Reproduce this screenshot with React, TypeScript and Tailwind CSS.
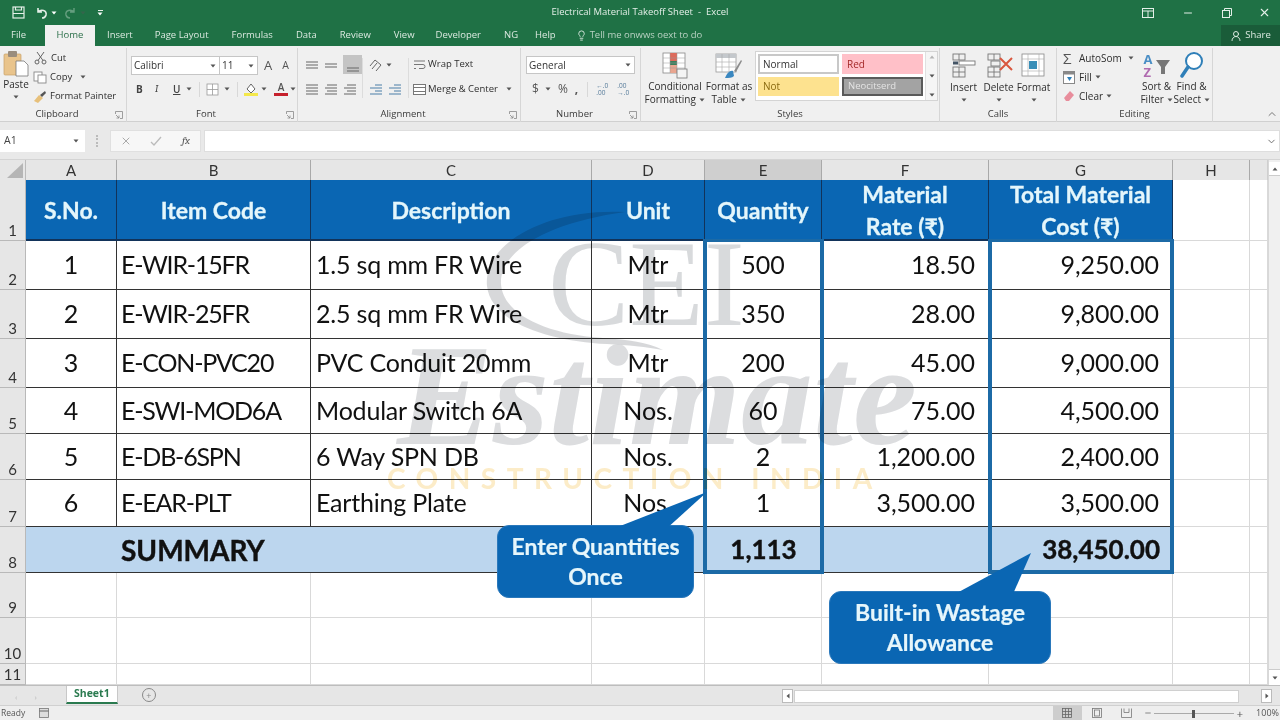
import type { ReactNode } from 'react'
import { ChevronDown, ChevronUp, Lightbulb, Minus, UserRound, X } from 'lucide-react'

const TABS = [
  { label: 'Insert', cls: 'ml-[12px]' },
  { label: 'Page Layout', cls: 'ml-[22px]' },
  { label: 'Formulas', cls: 'ml-[23px]' },
  { label: 'Data', cls: 'ml-[23px]' },
  { label: 'Review', cls: 'ml-[23px]' },
  { label: 'View', cls: 'ml-[23px]' },
  { label: 'Developer', cls: 'ml-[21px]' },
  { label: 'NG', cls: 'ml-[23px]' },
  { label: 'Help', cls: 'ml-[17px]' },
]

const COLS = ['A', 'B', 'C', 'D', 'E', 'F', 'G', 'H']
const ROW_HEIGHTS = [61, 49, 49, 49, 46, 46, 47, 46, 45, 46, 21]

const ROWS = [
  ['1', 'E-WIR-15FR', '1.5 sq mm FR Wire', 'Mtr', '500', '18.50', '9,250.00'],
  ['2', 'E-WIR-25FR', '2.5 sq mm FR Wire', 'Mtr', '350', '28.00', '9,800.00'],
  ['3', 'E-CON-PVC20', 'PVC Conduit 20mm', 'Mtr', '200', '45.00', '9,000.00'],
  ['4', 'E-SWI-MOD6A', 'Modular Switch 6A', 'Nos.', '60', '75.00', '4,500.00'],
  ['5', 'E-DB-6SPN', '6 Way SPN DB', 'Nos.', '2', '1,200.00', '2,400.00'],
  ['6', 'E-EAR-PLT', 'Earthing Plate', 'Nos.', '1', '3,500.00', '3,500.00'],
]

const HEADERS = ['S.No.', 'Item Code', 'Description', 'Unit', 'Quantity', 'Material\nRate (₹)', 'Total Material\nCost (₹)']
const ALIGN = [
  'justify-center',
  'justify-start pl-[4px] tracking-[-1.2px]',
  'justify-start pl-[5px] tracking-[-0.2px]',
  'justify-center',
  'justify-center',
  'justify-end pr-[13px]',
  'justify-end pr-[13px]',
]

const Caret = ({ className = '' }: { className?: string }) => (
  <svg width="6" height="4" viewBox="0 0 6 4" className={`shrink-0 ${className}`}>
    <path d="M0.5 0.5h5L3 3.5z" fill="#555" />
  </svg>
)

function Lines({ rows, color = '#666' }: { rows: [number, number][]; color?: string }) {
  return (
    <svg width="14" height="12" viewBox="0 0 14 12">
      {rows.map(([x, y], i) => (
        <path key={i} d={`M${x} ${y}H${14 - (i % 2 ? x : 1)}`} stroke={color} strokeWidth="1" />
      ))}
    </svg>
  )
}

function Group({ label, width, launcher, children }: { label: string; width: string; launcher?: boolean; children: ReactNode }) {
  return (
    <div className={`${width} h-[74px] mt-[2px] shrink-0 flex flex-col border-r border-[#d6d6d6]`}>
      <div className="flex-1 flex min-h-0">{children}</div>
      <div className={`relative h-[16px] flex items-center justify-center text-[9.5px] text-[#3a3a3a] ${launcher ? 'pr-[12px]' : ''}`}>
        {label}
        {launcher && (
          <svg width="8" height="8" viewBox="0 0 8 8" className="absolute right-[3px] top-[5px]">
            <path d="M0.5 3V0.5H7.5V7.5H5M1 4l3 3M4 4.5V7H1.5" stroke="#888" fill="none" strokeWidth="0.8" />
          </svg>
        )}
      </div>
    </div>
  )
}

function BigButton({ label, icon, width, caret }: { label: ReactNode; icon: ReactNode; width: string; caret?: boolean }) {
  return (
    <div className={`${width} shrink-0 flex flex-col items-center text-[10px] leading-[13px] text-[#2e2e2e]`}>
      <div className="h-[29px] mb-[1px] flex items-end justify-center">{icon}</div>
      <div className="text-center whitespace-nowrap">{label}</div>
      {caret && <Caret className="mt-[4px]" />}
    </div>
  )
}

const PasteIcon = () => (
  <svg width="26" height="27" viewBox="0 0 26 27">
    <rect x="1" y="4" width="17" height="21" rx="1" fill="#e9c48c" stroke="#c9a269" strokeWidth="0.7" />
    <rect x="5" y="1" width="9" height="6" rx="1" fill="#9a8d7d" />
    <path d="M13 11h8l4 4v11H13z" fill="#fff" stroke="#777" strokeWidth="0.8" />
  </svg>
)

const CfIcon = () => (
  <svg width="26" height="27" viewBox="0 0 26 27">
    <rect x="1" y="1" width="22" height="20" fill="#fff" stroke="#888" strokeWidth="0.8" />
    <rect x="8" y="1" width="7" height="8" fill="#dd6b5c" />
    <rect x="8" y="9" width="7" height="4" fill="#3c7e5c" />
    <rect x="8" y="13" width="7" height="8" fill="#e9a58f" />
    <path d="M1 6h22M1 11h22M1 16h22M8 1v20M15 1v20" stroke="#999" strokeWidth="0.5" />
    <rect x="15" y="17" width="10" height="9" fill="#f4f4f4" stroke="#777" strokeWidth="0.8" />
  </svg>
)

const TableIcon = () => (
  <svg width="28" height="27" viewBox="0 0 28 27">
    <rect x="1" y="2" width="20" height="18" fill="#fff" stroke="#9a9a9a" strokeWidth="0.8" />
    <rect x="1" y="2" width="20" height="4" fill="#c4c8cc" />
    <path d="M1 10h20M1 15h20M7 2v18M14 2v18" stroke="#aaa" strokeWidth="0.6" />
    <path d="M10 26c2-5 5-8 8-7l1 5c-2 2-5 2-9 2z" fill="#3a87c0" />
    <path d="M19 19l7-11 1 1-6 11z" fill="#8c8c8c" />
  </svg>
)

const CellsIcon = ({ variant }: { variant: 'insert' | 'delete' | 'format' }) => (
  <svg width="28" height="28" viewBox="0 0 28 28">
    {variant === 'format' ? (
      <g>
        <rect x="2" y="2" width="22" height="22" fill="#fff" stroke="#888" strokeWidth="0.8" />
        <path d="M2 7h22M8 2v22M19 2v22M2 19h22" stroke="#aaa" strokeWidth="0.6" />
        <rect x="9" y="9" width="8" height="8" fill="#3a8fb8" />
      </g>
    ) : (
      <g fill="none" stroke="#777" strokeWidth="0.9">
        <rect x="3" y="2" width="12" height="6" />
        <path d="M9 2v6" />
        <rect x="3" y="15" width="12" height="10" />
        <path d="M9 15v10M3 20h12" />
        {variant === 'insert' ? (
          <g>
            <rect x="9" y="9" width="16" height="4" fill="#fff" />
            <path d="M3 11h5" stroke="#456" strokeWidth="3" />
          </g>
        ) : (
          <g>
            <rect x="6" y="9" width="9" height="5" />
            <path d="M15 6l12 12M27 6L15 18" stroke="#d9573f" strokeWidth="2" />
          </g>
        )}
      </g>
    )}
  </svg>
)

const SortIcon = () => (
  <div className="relative w-[28px] h-[27px] text-[13px] leading-[12px] font-bold">
    <span className="absolute left-[1px] top-[1px] text-[#4a8ec5]">A</span>
    <span className="absolute left-[1px] top-[14px] text-[#b06bb0]">Z</span>
    <svg width="16" height="16" viewBox="0 0 16 16" className="absolute right-0 top-[7px]">
      <path d="M1 1h14L10 8v7H6V8z" fill="#777" />
    </svg>
  </div>
)

const FindIcon = () => (
  <svg width="24" height="28" viewBox="0 0 24 28">
    <circle cx="14" cy="10" r="8" fill="#fff" stroke="#2f7fb8" strokeWidth="2" />
    <path d="M8 16L2 25" stroke="#2f7fb8" strokeWidth="3.5" strokeLinecap="round" />
  </svg>
)

function Ribbon() {
  return (
    <div className="h-[76px] bg-[#f0f0f0] flex border-b border-[#d0d0d0] relative">
      <Group label="Clipboard" width="w-[127px]" launcher>
        <div className="w-[33px] pl-[1px]">
          <BigButton label="Paste" icon={<PasteIcon />} width="w-[30px]" caret />
        </div>
        <div className="flex flex-col text-[9.5px] text-[#2e2e2e] pt-[3px] gap-[5px] leading-[14px]">
          <div className="flex items-center gap-[4px] pl-[1px]">
            <svg width="13" height="14" viewBox="0 0 13 14" fill="none" stroke="#666" strokeWidth="1">
              <circle cx="3" cy="11" r="2" /><circle cx="10" cy="11" r="2" /><path d="M4 9.5L10 1M9 9.5L3 1" />
            </svg>
            Cut
          </div>
          <div className="flex items-center gap-[3px]">
            <svg width="14" height="13" viewBox="0 0 14 13" fill="#fff" stroke="#888" strokeWidth="0.9">
              <rect x="1" y="1" width="8" height="9" /><rect x="5" y="4" width="8" height="8" />
            </svg>
            <span>Copy</span>
            <Caret className="ml-[5px]" />
          </div>
          <div className="flex items-center gap-[3px]">
            <svg width="14" height="13" viewBox="0 0 14 13">
              <path d="M1 11l5-6 4 3-5 5z" fill="#e7c07a" /><path d="M7 5l5-4 1 2-4 4z" fill="#555" />
            </svg>
            Format Painter
          </div>
        </div>
      </Group>

      <Group label="Font" width="w-[171px]" launcher>
        <div className="flex flex-col pl-[4px] pt-[8px] w-full">
          <div className="flex items-center h-[19px]">
            <div className="w-[89px] h-[19px] bg-white border border-[#c6c6c6] flex items-center justify-between px-[2px] text-[10px] text-[#333]">
              Calibri<Caret className="mr-[1px]" />
            </div>
            <div className="w-[38px] h-[19px] bg-white border border-l-0 border-[#c6c6c6] flex items-center justify-between px-[2px] text-[10px] text-[#333]">
              11<Caret className="mr-[1px]" />
            </div>
            <span className="ml-[6px] text-[13px] text-[#555]">A</span>
            <span className="ml-[10px] text-[10.5px] text-[#555]">A</span>
          </div>
          <div className="flex items-center h-[16px] mt-[6px] text-[10px] text-[#444]">
            <span className="ml-[5px] w-[19px] font-bold">B</span>
            <span className="w-[18px] italic font-serif">I</span>
            <span className="underline font-semibold">U</span>
            <Caret className="ml-[6px]" />
            <div className="w-[1px] h-[15px] bg-[#d8d8d8] ml-[7px]" />
            <svg width="13" height="13" viewBox="0 0 13 13" className="ml-[6px]" fill="#fff" stroke="#999" strokeWidth="0.8">
              <rect x="1" y="1" width="11" height="11" /><path d="M6.5 1v11M1 6.5h11" />
            </svg>
            <Caret className="ml-[5px]" />
            <div className="w-[1px] h-[15px] bg-[#d8d8d8] ml-[7px]" />
            <svg width="16" height="16" viewBox="0 0 16 16" className="ml-[5px]">
              <path d="M4 8l4-5 4 5-4 4z" fill="#fff" stroke="#666" />
              <rect x="1" y="12" width="14" height="3" fill="#f4e84b" />
            </svg>
            <Caret className="ml-[2px]" />
            <div className="ml-[6px] w-[15px] flex flex-col items-center leading-[11px] font-semibold text-[#555]">
              A<div className="w-[14px] h-[3px] bg-[#c6202c]" />
            </div>
            <Caret className="ml-[2px]" />
          </div>
        </div>
      </Group>

      <Group label="Alignment" width="w-[223px]" launcher>
        <div className="flex pt-[7px] pl-[7px]">
          <div className="flex flex-col w-[57px]">
            <div className="flex items-center h-[19px] gap-[5px]">
              <Lines rows={[[1, 3], [1, 6], [1, 9]]} />
              <Lines rows={[[1, 5], [1, 8]]} />
              <div className="w-[19px] h-[19px] bg-[#c4c4c4] flex items-end justify-center"><Lines rows={[[1, 6], [1, 9]]} /></div>
            </div>
            <div className="flex items-center h-[16px] mt-[7px] gap-[5px]">
              <Lines rows={[[1, 2], [1, 5], [1, 8], [1, 11]]} />
              <Lines rows={[[3, 2], [1, 5], [3, 8], [1, 11]]} />
              <Lines rows={[[4, 2], [1, 5], [4, 8], [1, 11]]} />
            </div>
          </div>
          <div className="w-[1px] h-[40px] bg-[#dcdcdc] mt-[3px]" />
          <div className="flex flex-col w-[40px] pl-[6px]">
            <div className="flex items-center h-[19px] gap-[2px]">
              <svg width="15" height="14" viewBox="0 0 15 14" stroke="#666" fill="none">
                <path d="M1 8l5-6 6 5M3 11l5-6M7 13l5-6" />
              </svg>
              <Caret />
            </div>
            <div className="flex items-center h-[16px] mt-[7px] gap-[5px]">
              <Lines rows={[[6, 2], [1, 5], [6, 8], [1, 11]]} color="#4a7fa8" />
              <Lines rows={[[6, 2], [1, 5], [6, 8], [1, 11]]} color="#4a7fa8" />
            </div>
          </div>
          <div className="w-[1px] h-[40px] bg-[#dcdcdc] mt-[3px] ml-[5px]" />
          <div className="flex flex-col pl-[4px] text-[9.5px] text-[#2e2e2e]">
            <div className="flex items-center h-[19px] gap-[2px]">
              <svg width="13" height="13" viewBox="0 0 13 13" fill="none" stroke="#777">
                <path d="M1 3h11M1 6.5h9a2 2 0 010 4H6M1 10.5h2" />
              </svg>
              Wrap Text
            </div>
            <div className="flex items-center h-[16px] mt-[7px] gap-[2px] whitespace-nowrap">
              <svg width="13" height="13" viewBox="0 0 13 13" fill="#fff" stroke="#777">
                <rect x="0.5" y="1.5" width="12" height="10" /><path d="M0.5 4.5h12M0.5 8.5h12" />
              </svg>
              Merge &amp; Center
              <Caret className="ml-[6px]" />
            </div>
          </div>
        </div>
      </Group>

      <Group label="Number" width="w-[120px]" launcher>
        <div className="flex flex-col pl-[5px] pt-[8px] w-full">
          <div className="w-[109px] h-[18px] bg-white border border-[#c6c6c6] flex items-center justify-between px-[2px] text-[10px] text-[#333]">
            General<Caret className="mr-[1px]" />
          </div>
          <div className="flex items-center h-[16px] mt-[7px] text-[#555]">
            <span className="ml-[6px] text-[12px]">$</span>
            <Caret className="ml-[6px]" />
            <span className="ml-[7px] text-[12px]">%</span>
            <span className="ml-[7px] text-[12px] font-bold leading-[8px]">,</span>
            <div className="w-[1px] h-[15px] bg-[#d8d8d8] ml-[9px]" />
            <div className="ml-[8px] text-[6.5px] leading-[7px] w-[15px] text-[#557a99]">←.0<br />.00</div>
            <div className="ml-[6px] text-[6.5px] leading-[7px] w-[15px] text-[#557a99]">.00<br />→.0</div>
          </div>
        </div>
      </Group>

      <Group label="Styles" width="w-[299px]">
        <div className="flex pl-[4px] pt-[3px]">
          <BigButton
            width="w-[60px]"
            icon={<CfIcon />}
            label={<>Conditional<br />Formatting <Caret className="inline ml-[1px]" /></>}
          />
          <BigButton
            width="w-[48px]"
            icon={<TableIcon />}
            label={<>Format as<br />Table <Caret className="inline ml-[1px]" /></>}
          />
          <div className="ml-[2px] w-[183px] h-[50px] bg-white border border-[#d4d4d4] flex">
            <div className="grid grid-cols-[81px_81px] grid-rows-[20px_19px] gap-x-[3px] gap-y-[3px] p-[2px] text-[10px]">
              <div className="border-2 border-[#c8c8c8] bg-white flex items-center pl-[3px] text-[#333]">Normal</div>
              <div className="bg-[#ffc0c8] flex items-center pl-[5px] text-[#a52a2a]">Red</div>
              <div className="bg-[#fde28f] flex items-center pl-[5px] text-[#8a6a10]">Not</div>
              <div className="bg-[#a3a3a3] border-2 border-[#5a5a5a] flex items-center pl-[4px] text-[#e4e4e4] text-[9.5px]">Neocitserd</div>
            </div>
            <div className="flex-1 flex flex-col items-center justify-between border-l border-[#e0e0e0] py-[3px] bg-[#f5f5f5]">
              <Caret className="rotate-180 opacity-40" />
              <Caret />
              <Caret />
            </div>
          </div>
        </div>
      </Group>

      <Group label="Calls" width="w-[117px]">
        <div className="flex pl-[6px] pt-[3px]">
          <BigButton width="w-[35px]" icon={<CellsIcon variant="insert" />} label="Insert" caret />
          <BigButton width="w-[35px]" icon={<CellsIcon variant="delete" />} label="Delete" caret />
          <BigButton width="w-[35px]" icon={<CellsIcon variant="format" />} label="Format" caret />
        </div>
      </Group>

      <Group label="Editing" width="w-[156px]">
        <div className="flex pl-[6px] pt-[3px]">
          <div className="w-[76px] flex flex-col gap-[5px] text-[10px] leading-[14px] text-[#2e2e2e]">
            <div className="flex items-center whitespace-nowrap">
              <span className="w-[16px] text-[15px] leading-[14px] text-[#555]">Σ</span>AutoSom<Caret className="ml-[6px]" />
            </div>
            <div className="flex items-center">
              <svg width="12" height="13" viewBox="0 0 12 13" className="mr-[4px]">
                <rect x="0.5" y="0.5" width="11" height="12" fill="#fff" stroke="#888" />
                <rect x="0.5" y="0.5" width="11" height="3" fill="#888" />
                <path d="M4 6h5l-2.500 4z" fill="#2f7fb8" />
              </svg>
              Fill<Caret className="ml-[3px]" />
            </div>
            <div className="flex items-center">
              <svg width="12" height="12" viewBox="0 0 12 12" className="mr-[4px]">
                <path d="M1 8l6-7 4 4-5 6H3z" fill="#e88d9c" />
              </svg>
              Clear<Caret className="ml-[3px]" />
            </div>
          </div>
          <BigButton width="w-[35px]" icon={<SortIcon />} label={<>Sort &amp;<br />Filter <Caret className="inline" /></>} />
          <BigButton width="w-[35px]" icon={<FindIcon />} label={<>Find &amp;<br />Select <Caret className="inline" /></>} />
        </div>
      </Group>
      <ChevronUp size={12} className="absolute right-[2px] bottom-[1px] text-[#777]" />
    </div>
  )
}

function FormulaBar() {
  return (
    <div className="h-[38px] bg-[#e9e9e9] flex items-start pt-[8px] border-b border-[#d4d4d4]">
      <div className="w-[85px] h-[22px] bg-white flex items-center justify-between pl-[4px] pr-[6px] text-[10.5px] text-[#444]">
        A1<Caret />
      </div>
      <div className="ml-[11px] mt-[5px] w-[2px] h-[12px] border-l-2 border-dotted border-[#bbb]" />
      <div className="w-[91px] ml-[12px] h-[22px] bg-[#f7f7f7] border border-[#e0e0e0] flex items-center text-[#aaa]">
        <X size={12} className="ml-[9px]" />
        <svg width="12" height="12" viewBox="0 0 12 12" className="ml-[18px]" fill="none" stroke="#bbb" strokeWidth="1.3">
          <path d="M1 7l3 3 7-8" />
        </svg>
        <span className="ml-[20px] italic font-serif text-[11px] text-[#555]">fx</span>
      </div>
      <div className="flex-1 ml-[3px] h-[22px] bg-white border border-[#dedede] flex items-center justify-end pr-[2px]">
        <ChevronDown size={11} className="text-[#666]" />
      </div>
    </div>
  )
}

function Cell({ row, col, className, children }: { row: number; col: number; className: string; children?: ReactNode }) {
  return (
    <div style={{ gridRow: row, gridColumn: col }} className={className}>
      {children}
    </div>
  )
}

function Sheet() {
  return (
    <div className="relative h-[525px] flex bg-white">
      <div className="flex-1 grid grid-cols-[26px_91px_194px_281px_113px_117px_167px_184px_77px_1fr] grid-rows-[20px_61px_49px_49px_49px_46px_46px_47px_46px_45px_46px_21px] overflow-hidden">
        {/* select-all corner */}
        <Cell row={1} col={1} className="bg-[#e6e6e6] flex items-end justify-end pr-[2px] pb-[2px] border-r border-[#bbb]">
          <svg width="16" height="15" viewBox="0 0 16 15"><path d="M16 0v15H0z" fill="#b5b5b5" /></svg>
        </Cell>
        {COLS.map((c, i) => (
          <Cell
            key={c}
            row={1}
            col={i + 2}
            className={`${c === 'E' ? 'bg-[#cfcfcf]' : 'bg-[#e6e6e6]'} border-r border-[#a9a9a9] flex items-end justify-center text-[15px] leading-[19px] text-[#333] font-['Lato',sans-serif]`}
          >
            {c}
          </Cell>
        ))}
        <Cell row={1} col={10} className="bg-[#e6e6e6] border-r border-[#cfcfcf]" />

        {ROW_HEIGHTS.map((_, i) => (
          <Cell
            key={i}
            row={i + 2}
            col={1}
            className="bg-[#e6e6e6] border-b border-r border-[#b9b9b9] flex items-end justify-center text-[15px] leading-[20px] text-[#333] font-['Lato',sans-serif]"
          >
            {i + 1}
          </Cell>
        ))}

        {/* header row */}
        {HEADERS.map((h, i) => (
          <Cell
            key={h}
            row={2}
            col={i + 2}
            className="bg-[#0a66b3] border-r border-b-2 border-[#12335a] flex items-center justify-center text-center whitespace-pre-line font-bold text-[23px] leading-[32px] text-[#e4f6fb] [-webkit-text-stroke:0.3px] font-['Lato',sans-serif]"
          >
            {h}
          </Cell>
        ))}

        {/* data rows */}
        {ROWS.map((r, ri) =>
          r.map((v, ci) => (
            <Cell
              key={ci}
              row={ri + 3}
              col={ci + 2}
              className={`${ALIGN[ci]} border-r border-b-[1.5px] border-[#333] flex items-center text-[25px] text-[#111] font-['Lato',sans-serif]`}
            >
              {v}
            </Cell>
          )),
        )}

        {/* summary */}
        <div style={{ gridRow: 9, gridColumn: '2 / 6' }} className="bg-[#bcd6ee] border-b-[1.5px] border-[#333] flex items-center pl-[95px] text-[28px] font-bold text-[#111] [-webkit-text-stroke:0.4px] font-['Lato',sans-serif]">
          SUMMARY
        </div>
        <Cell row={9} col={6} className="bg-[#bcd6ee] border-b-[1.5px] border-[#333] flex items-center justify-center text-[26px] font-bold text-[#111] [-webkit-text-stroke:0.4px] font-['Lato',sans-serif]">
          1,113
        </Cell>
        <Cell row={9} col={7} className="bg-[#bcd6ee] border-b-[1.5px] border-[#333]" />
        <Cell row={9} col={8} className="bg-[#bcd6ee] border-b-[1.5px] border-[#333] flex items-center justify-end pr-[13px] text-[26px] font-bold text-[#111] [-webkit-text-stroke:0.4px] font-['Lato',sans-serif]">
          38,450.00
        </Cell>

        {/* empty gridlines */}
        {[2, 3, 4, 5, 6, 7, 8, 9].flatMap((row) =>
          [9, 10].map((col) => (
            <Cell key={`${row}-${col}`} row={row} col={col} className="border-r border-b border-[#d9d9d9]" />
          )),
        )}
        {[10, 11, 12].flatMap((row) =>
          [2, 3, 4, 5, 6, 7, 8, 9, 10].map((col) => (
            <Cell key={`${row}-${col}`} row={row} col={col} className="border-r border-b border-[#d9d9d9]" />
          )),
        )}

        {/* blue outlines round Quantity and Total cost */}
        <div style={{ gridRow: '3 / 10', gridColumn: 6 }} className="-mx-[2px] -mt-[2px] -mb-[1px] border-4 border-t-[3px] border-[#1c6aa6] pointer-events-none z-10" />
        <div style={{ gridRow: '3 / 10', gridColumn: 8 }} className="-mx-[1px] -mt-[2px] -mb-[1px] border-4 border-t-[3px] border-[#1c6aa6] pointer-events-none z-10" />
      </div>

      {/* scrollbar */}
      <div className="w-[12px] shrink-0 bg-[#f0f0f0] border-l border-[#d8d8d8] flex flex-col justify-between items-center pt-[2px]">
        <div className="h-[14px] w-full bg-white border-b border-[#ccc] flex items-center justify-center"><Caret className="rotate-180" /></div>
        <div className="h-[16px] w-full bg-white border-t border-[#ccc] flex items-center justify-center"><Caret /></div>
      </div>

      {/* watermark over the sheet */}
      <div className="absolute left-[385px] top-[40px] w-[540px] h-[300px] pointer-events-none mix-blend-multiply z-20">
        <svg width="300" height="180" viewBox="0 0 300 180" className="absolute left-[90px] top-0">
          <path d="M150 12C70 8 8 44 12 86c4 36 60 55 120 58 20 1 40 3 56 6-16-8-34-10-60-12C70 134 28 114 26 84 24 50 76 22 150 12z" fill="#c9cbce" opacity="0.75" />
        </svg>
        <div className="absolute left-[163px] top-[34px] font-['Liberation_Serif',serif] text-[122px] leading-[100px] text-[#cfd1d4] opacity-80">
          CEI
        </div>
        <div className="absolute left-[12px] top-[131px] font-['Liberation_Serif',serif] italic font-bold text-[144px] leading-[130px] text-[#d0d2d5] opacity-75 whitespace-nowrap">
          Estimate
        </div>
        <div className="absolute left-[2px] top-[260px] font-['Lato',sans-serif] font-bold text-[28px] leading-[36px] tracking-[10.5px] text-[#fcecc8] whitespace-nowrap">
          CONSTRUCTION INDIA
        </div>
      </div>

      <Callout className="left-[497px] top-[365px] w-[197px] h-[73px]" lines={['Enter Quantities', 'Once']}>
        <svg width="100" height="40" viewBox="0 0 100 40" className="absolute left-[112px] -top-[34px]">
          <path d="M0 38L97 0 55 38z" fill="#0a66b3" />
        </svg>
      </Callout>
      <Callout className="left-[829px] top-[431px] w-[222px] h-[73px]" lines={['Built-in Wastage', 'Allowance']}>
        <svg width="80" height="42" viewBox="0 0 80 42" className="absolute left-[125px] -top-[40px]">
          <path d="M0 42L76 1 58 42z" fill="#0a66b3" />
        </svg>
      </Callout>
    </div>
  )
}

function Callout({ className, lines, children }: { className: string; lines: string[]; children: ReactNode }) {
  return (
    <div className={`absolute z-30 ${className} bg-[#0a66b3] border border-[#2a78bb] rounded-[12px] flex flex-col items-center justify-center text-[23px] leading-[30px] font-bold text-[#e6f6fb] [-webkit-text-stroke:0.2px] font-['Lato',sans-serif]`}>
      {children}
      {lines.map((l) => (
        <span key={l} className="relative -top-[1px]">{l}</span>
      ))}
    </div>
  )
}

function BottomBars() {
  return (
    <>
      <div className="h-[20px] bg-[#e6e6e6] flex items-start border-t border-[#bdbdbd]">
        <span className="ml-[15px] mt-[5px] text-[8px] text-[#bbb]">‹</span>
        <span className="ml-[17px] mt-[5px] text-[8px] text-[#bbb]">›</span>
        <div className="ml-[29px] w-[52px] h-[18px] bg-white border-b-2 border-[#2a7a4f] border-x border-x-[#c8c8c8] flex items-center justify-center text-[10.5px] font-bold text-[#2a7a4f]">
          Sheet1
        </div>
        <div className="ml-[24px] mt-[2px] w-[14px] h-[14px] rounded-full border border-[#888] flex items-center justify-center text-[9px] leading-none text-[#888]">+</div>
        <div className="ml-auto mt-[3px] mr-[8px] flex items-center w-[490px] h-[14px]">
          <div className="w-[11px] h-[14px] bg-white border border-[#bbb] flex items-center justify-center"><Caret className="rotate-90" /></div>
          <div className="flex-1 h-[13px] bg-white border border-[#d0d0d0] mx-[1px] mr-[22px]" />
          <div className="w-[11px] h-[14px] bg-white border border-[#bbb] flex items-center justify-center"><Caret className="-rotate-90" /></div>
        </div>
      </div>
      <div className="h-[15px] bg-[#eeeeee] border-t border-[#d0d0d0] flex items-center text-[8.5px] text-[#555]">
        <span className="ml-[1px]">Ready</span>
        <svg width="10" height="10" viewBox="0 0 10 10" className="ml-[14px]">
          <rect x="0.5" y="0.5" width="9" height="9" fill="#ddd" stroke="#777" strokeWidth="0.8" />
          <path d="M0.500 3h9" stroke="#666" />
        </svg>
        <div className="ml-auto flex items-center h-full">
          <div className="h-full w-[29px] bg-[#cdcdcd] flex items-center justify-center">
            <svg width="10" height="10" viewBox="0 0 10 10" fill="none" stroke="#666" strokeWidth="0.8"><rect x="0.500" y="0.500" width="9" height="9" /><path d="M0.500 3.500h9M0.500 6.500h9M3.500 0.500v9M6.500 0.500v9" /></svg>
          </div>
          <svg width="10" height="10" viewBox="0 0 10 10" className="ml-[10px]" fill="none" stroke="#777" strokeWidth="0.8"><rect x="0.500" y="0.500" width="9" height="9" /><rect x="2.500" y="2" width="5" height="6" /></svg>
          <svg width="11" height="10" viewBox="0 0 11 10" className="ml-[19px]" fill="none" stroke="#777" strokeWidth="0.8"><path d="M0.500 0.500v9h10v-9M3 0.500v4h5v-4" /></svg>
          <Minus size={8} className="ml-[12px] text-[#555]" />
          <div className="relative ml-[2px] w-[80px] h-[1px] bg-[#aaa]">
            <div className="absolute left-[38px] -top-[3px] w-[3px] h-[8px] bg-[#555]" />
          </div>
          <span className="ml-[3px] text-[11px] leading-none text-[#555]">+</span>
          <span className="ml-[13px] mr-[1px] text-[9px]">100%</span>
        </div>
      </div>
    </>
  )
}

export default function App() {
  return (
    <div className="w-[1280px] h-[720px] overflow-hidden flex flex-col font-['Open_Sans',sans-serif] bg-white">
      {/* title bar */}
      <div className="h-[25px] bg-[#1f7145] flex items-center relative text-[#e4efe8]">
        <svg width="13" height="13" viewBox="0 0 13 13" className="ml-[12px]" fill="none" stroke="#e4efe8" strokeWidth="1.2">
          <rect x="1" y="1" width="11" height="11" /><path d="M3.500 1v3h6V1M1 7.500h11" />
        </svg>
        <svg width="14" height="14" viewBox="0 0 14 14" className="ml-[10px]" fill="none" stroke="#e4efe8" strokeWidth="1.6">
          <path d="M3 2v4h4M3 6c3-3 9-2 8 3-.5 2-2 3-4 3" />
        </svg>
        <Caret className="ml-[2px] brightness-[3]" />
        <svg width="14" height="14" viewBox="0 0 14 14" className="ml-[6px] opacity-40" fill="none" stroke="#cfe3d6" strokeWidth="1.4">
          <path d="M11 2v4H7M11 6C8 3 2 4 3 9c.5 2 2 3 4 3" />
        </svg>
        <Caret className="ml-[3px] opacity-40" />
        <div className="ml-[11px] flex flex-col items-center gap-[1px]">
          <div className="w-[5px] h-[1px] bg-[#e4efe8]" />
          <Caret className="brightness-[3]" />
        </div>
        <div className="absolute left-0 right-0 text-center text-[9.5px]">Electrical Material Takeoff Sheet&nbsp; -&nbsp; Excel</div>
        <div className="ml-auto flex items-center mr-[9px]">
          <svg width="12" height="10" viewBox="0 0 12 10" fill="none" stroke="#e4efe8"><rect x="0.500" y="0.500" width="11" height="9" /><path d="M0.500 3h11M6 3v6.500" /></svg>
          <Minus size={12} className="ml-[28px]" />
          <svg width="10" height="10" viewBox="0 0 10 10" className="ml-[28px]" fill="none" stroke="#e4efe8">
            <rect x="0.500" y="2.500" width="7" height="7" /><path d="M2.500 2.500v-2h7v7h-2" />
          </svg>
          <X size={13} className="ml-[26px]" />
        </div>
      </div>

      {/* tabs */}
      <div className="h-[21px] bg-[#1f7145] flex items-center text-[9.5px] text-[#dbe9e0]">
        <span className="ml-[11px]">File</span>
        <div className="ml-[19px] w-[50px] h-full bg-[#f0f0f0] text-[#2b6f49] flex items-center justify-center">Home</div>
        {TABS.map((t) => (
          <span key={t.label} className={t.cls}>{t.label}</span>
        ))}
        <Lightbulb size={11} className="ml-[20px] text-[#dbe9e0]" />
        <span className="ml-[3px] text-[#b9d2c3]">Tell me onwws oext to do</span>
        <div className="ml-auto w-[59px] h-full bg-[#1a5c39] flex items-center justify-center gap-[3px]">
          <UserRound size={12} />Share
        </div>
      </div>

      <Ribbon />
      <FormulaBar />
      <Sheet />
      <BottomBars />
    </div>
  )
}
